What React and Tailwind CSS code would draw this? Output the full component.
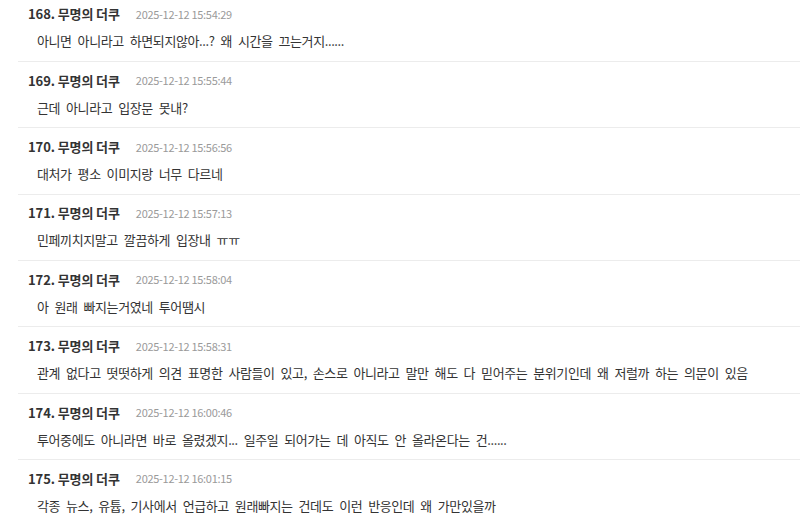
import React from 'react';

const comments = [
  { no: 168, date: '2025-12-12 15:54:29', text: '아니면 아니라고 하면되지않아...? 왜 시간을 끄는거지......' },
  { no: 169, date: '2025-12-12 15:55:44', text: '근데 아니라고 입장문 못내?' },
  { no: 170, date: '2025-12-12 15:56:56', text: '대처가 평소 이미지랑 너무 다르네' },
  { no: 171, date: '2025-12-12 15:57:13', text: '민페끼치지말고 깔끔하게 입장내 ㅠㅠ' },
  { no: 172, date: '2025-12-12 15:58:04', text: '아 원래 빠지는거였네 투어땜시' },
  { no: 173, date: '2025-12-12 15:58:31', text: '관계 없다고 떳떳하게 의견 표명한 사람들이 있고, 손스로 아니라고 말만 해도 다 믿어주는 분위기인데 왜 저럴까 하는 의문이 있음' },
  { no: 174, date: '2025-12-12 16:00:46', text: '투어중에도 아니라면 바로 올렸겠지... 일주일 되어가는 데 아직도 안 올라온다는 건......' },
  { no: 175, date: '2025-12-12 16:01:15', text: '각종 뉴스, 유튭, 기사에서 언급하고 원래빠지는 건데도 이런 반응인데 왜 가만있을까' },
];

function Comment({ item }) {
  return (
    <div className="border-b border-[#ececec] pl-[10px] pt-[9.5px] pb-[10.9px]">
      <div className="flex items-center h-[18px]">
        <span className="text-[13px] font-bold text-[#333] tracking-[-0.1px]">{`${item.no}. 무명의 더쿠`}</span>
        <span className="ml-[16px] text-[11px] text-[#9a9a9a] tracking-[-0.3px]">{item.date}</span>
      </div>
      <div className="mt-[9px] h-[18px] flex items-center pl-[9px] text-[13px] text-[#333] tracking-[-0.4px] [word-spacing:3.4px] whitespace-nowrap">
        {item.text}
      </div>
    </div>
  );
}

export default function App() {
  return (
    <div className="w-[800px] h-[518px] overflow-hidden bg-white" style={{ fontFamily: '"Noto Sans CJK KR", "Noto Sans", sans-serif' }}>
      <div className="-mt-[4.5px] pl-[18px]">
        {comments.map((c) => (
          <Comment key={c.no} item={c} />
        ))}
      </div>
    </div>
  );
}
